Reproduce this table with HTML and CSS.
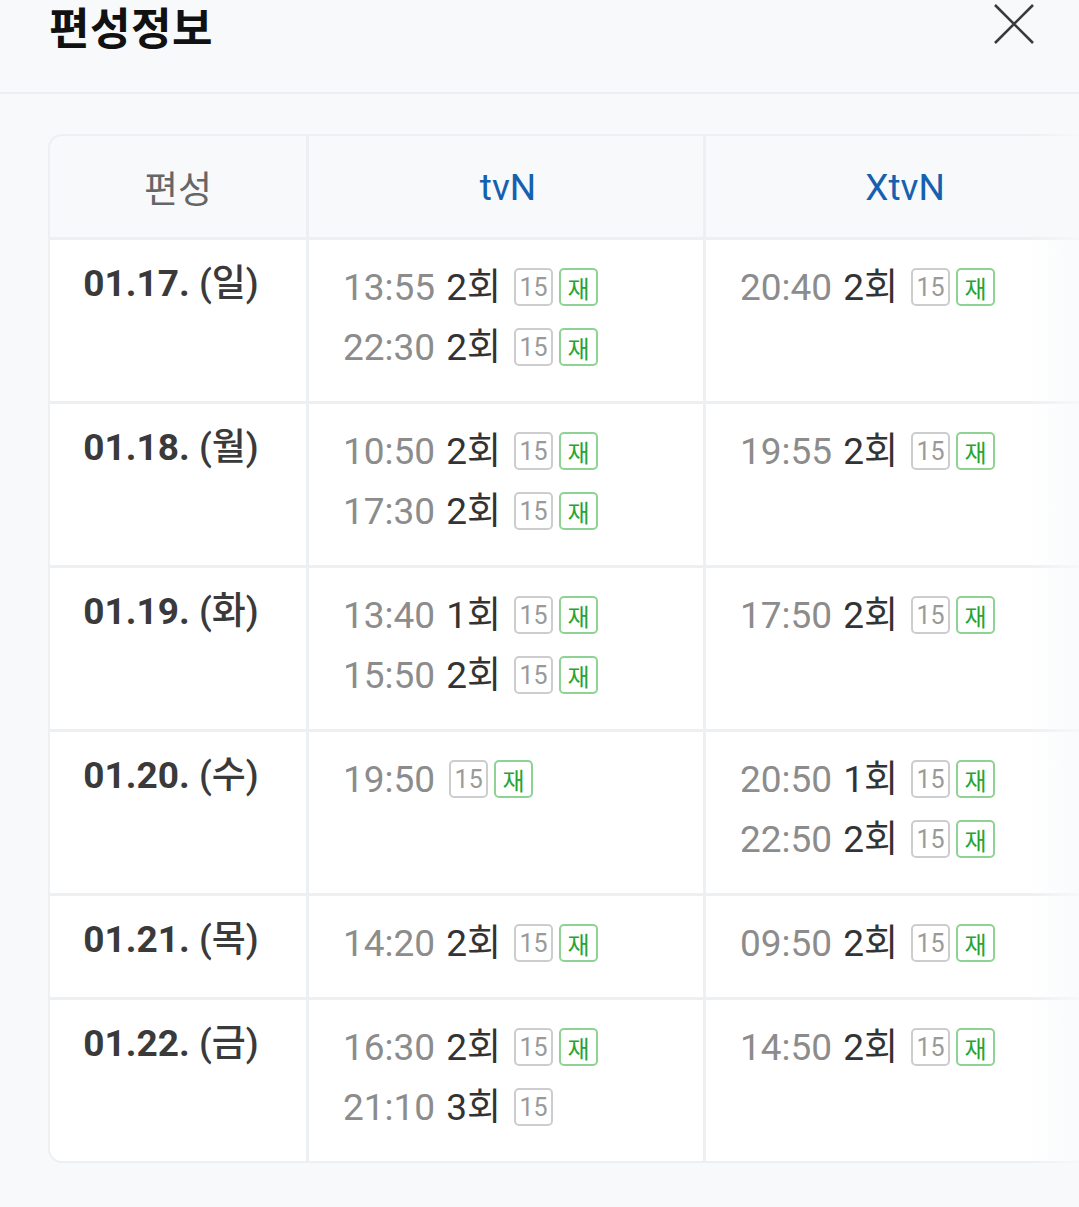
FILE: index.html
```html
<!DOCTYPE html>
<html lang="ko">
<head>
<meta charset="utf-8">
<title>편성정보</title>
<link rel="stylesheet" href="styles.css">
</head>
<body>
<header class="top">
  <h1 class="title">편성정보</h1>
  <button class="close" aria-label="닫기">
    <svg width="40" height="40" viewBox="0 0 40 40"><path d="M1 1L39 39M39 1L1 39" stroke="#3a3a3a" stroke-width="2.6" fill="none"/></svg>
  </button>
</header>
<main class="content">
  <div class="grid">
    <div class="hcell hlabel">편성</div>
    <div class="hcell hch">tvN</div>
    <div class="hcell hch">XtvN</div>

    <div class="dcell">01.17. <span class="day">(일)</span></div>
    <div class="tcell">
      <div class="line"><span class="time">13:55</span><span class="ep">2회</span><span class="b15">15</span><span class="bre">재</span></div>
      <div class="line"><span class="time">22:30</span><span class="ep">2회</span><span class="b15">15</span><span class="bre">재</span></div>
    </div>
    <div class="tcell">
      <div class="line"><span class="time">20:40</span><span class="ep">2회</span><span class="b15">15</span><span class="bre">재</span></div>
    </div>

    <div class="dcell">01.18. <span class="day">(월)</span></div>
    <div class="tcell">
      <div class="line"><span class="time">10:50</span><span class="ep">2회</span><span class="b15">15</span><span class="bre">재</span></div>
      <div class="line"><span class="time">17:30</span><span class="ep">2회</span><span class="b15">15</span><span class="bre">재</span></div>
    </div>
    <div class="tcell">
      <div class="line"><span class="time">19:55</span><span class="ep">2회</span><span class="b15">15</span><span class="bre">재</span></div>
    </div>

    <div class="dcell">01.19. <span class="day">(화)</span></div>
    <div class="tcell">
      <div class="line"><span class="time">13:40</span><span class="ep">1회</span><span class="b15">15</span><span class="bre">재</span></div>
      <div class="line"><span class="time">15:50</span><span class="ep">2회</span><span class="b15">15</span><span class="bre">재</span></div>
    </div>
    <div class="tcell">
      <div class="line"><span class="time">17:50</span><span class="ep">2회</span><span class="b15">15</span><span class="bre">재</span></div>
    </div>

    <div class="dcell">01.20. <span class="day">(수)</span></div>
    <div class="tcell">
      <div class="line"><span class="time">19:50</span><span class="b15">15</span><span class="bre">재</span></div>
    </div>
    <div class="tcell">
      <div class="line"><span class="time">20:50</span><span class="ep">1회</span><span class="b15">15</span><span class="bre">재</span></div>
      <div class="line"><span class="time">22:50</span><span class="ep">2회</span><span class="b15">15</span><span class="bre">재</span></div>
    </div>

    <div class="dcell">01.21. <span class="day">(목)</span></div>
    <div class="tcell">
      <div class="line"><span class="time">14:20</span><span class="ep">2회</span><span class="b15">15</span><span class="bre">재</span></div>
    </div>
    <div class="tcell">
      <div class="line"><span class="time">09:50</span><span class="ep">2회</span><span class="b15">15</span><span class="bre">재</span></div>
    </div>

    <div class="dcell">01.22. <span class="day">(금)</span></div>
    <div class="tcell">
      <div class="line"><span class="time">16:30</span><span class="ep">2회</span><span class="b15">15</span><span class="bre">재</span></div>
      <div class="line"><span class="time">21:10</span><span class="ep">3회</span><span class="b15">15</span></div>
    </div>
    <div class="tcell">
      <div class="line"><span class="time">14:50</span><span class="ep">2회</span><span class="b15">15</span><span class="bre">재</span></div>
    </div>
  </div>
  <div class="fade"></div>
</main>
</body>
</html>
```
FILE: styles.css
```css
html, body {
  margin: 0;
  padding: 0;
}
body {
  background: #f7f9fb;
  font-family: Roboto, "Noto Sans CJK KR", sans-serif;
  overflow: hidden;
  width: 1079px;
  height: 1207px;
}
.top {
  position: relative;
  height: 94px;
  border-bottom: 2px solid #eceef1;
  box-sizing: border-box;
  display: flex;
  justify-content: space-between;
  align-items: flex-start;
}
.title {
  margin: 0 0 0 49px;
  font-family: "Noto Sans CJK KR", sans-serif;
  font-weight: 700;
  font-size: 44px;
  line-height: 52px;
  color: #111;
  letter-spacing: 0.5px;
}
.close {
  margin: 4px 45px 0 0;
  padding: 0;
  border: 0;
  background: none;
  width: 40px;
  height: 40px;
  display: flex;
}
.content {
  position: relative;
  padding: 40px 0 0 48px;
}
.grid {
  display: grid;
  grid-template-columns: 256px 394px 394px;
  grid-template-rows: 101px 161px 161px 161px 161px 101px 161px;
  gap: 3px;
  width: max-content;
  background: #edf0f2;
  border: 2px solid #edf0f2;
  border-radius: 14px;
  overflow: hidden;
}
.hcell {
  background: #f7f9fb;
  display: flex;
  align-items: center;
  justify-content: center;
}
.hlabel {
  font-family: "Noto Sans CJK KR", sans-serif;
  font-size: 37px;
  color: #666;
  padding-top: 1px;
}
.hch {
  font-size: 37px;
  color: #1561b0;
  padding: 2px 0 0 4px;
}
.dcell {
  background: #fff;
  text-align: center;
  font-weight: 700;
  font-size: 37px;
  line-height: 60px;
  color: #3a3a3a;
  padding: 14px 14px 0 0;
  box-sizing: border-box;
}
.day {
  font-weight: 500;
}
.tcell {
  background: #fff;
  padding: 18px 0 0 34px;
  box-sizing: border-box;
}
.line {
  display: flex;
  align-items: baseline;
  height: 60px;
  line-height: 60px;
}
.time {
  font-size: 37px;
  color: #8c8c8c;
  margin-right: 11px;
}
.ep {
  font-size: 37px;
  color: #333;
  margin-right: 13px;
}
.time + .b15 {
  margin-left: 3px;
}
.b15, .bre {
  align-self: center;
  box-sizing: border-box;
  width: 39px;
  height: 38px;
  line-height: normal;
  border-radius: 5px;
  border: 2px solid #cdcdcd;
  display: inline-flex;
  align-items: center;
  justify-content: center;
  font-size: 25px;
  color: #9a9a9a;
  margin-top: -2px;
}
.bre {
  margin-left: 6px;
  border-color: #8fd394;
  color: #27a534;
  font-family: "Noto Sans CJK KR", sans-serif;
  font-size: 24px;
}
.fade {
  position: absolute;
  top: 40px;
  right: 0;
  bottom: 0;
  width: 50px;
  background: linear-gradient(to right, rgba(247, 249, 251, 0), rgba(247, 249, 251, 0.85));
  pointer-events: none;
}
```
